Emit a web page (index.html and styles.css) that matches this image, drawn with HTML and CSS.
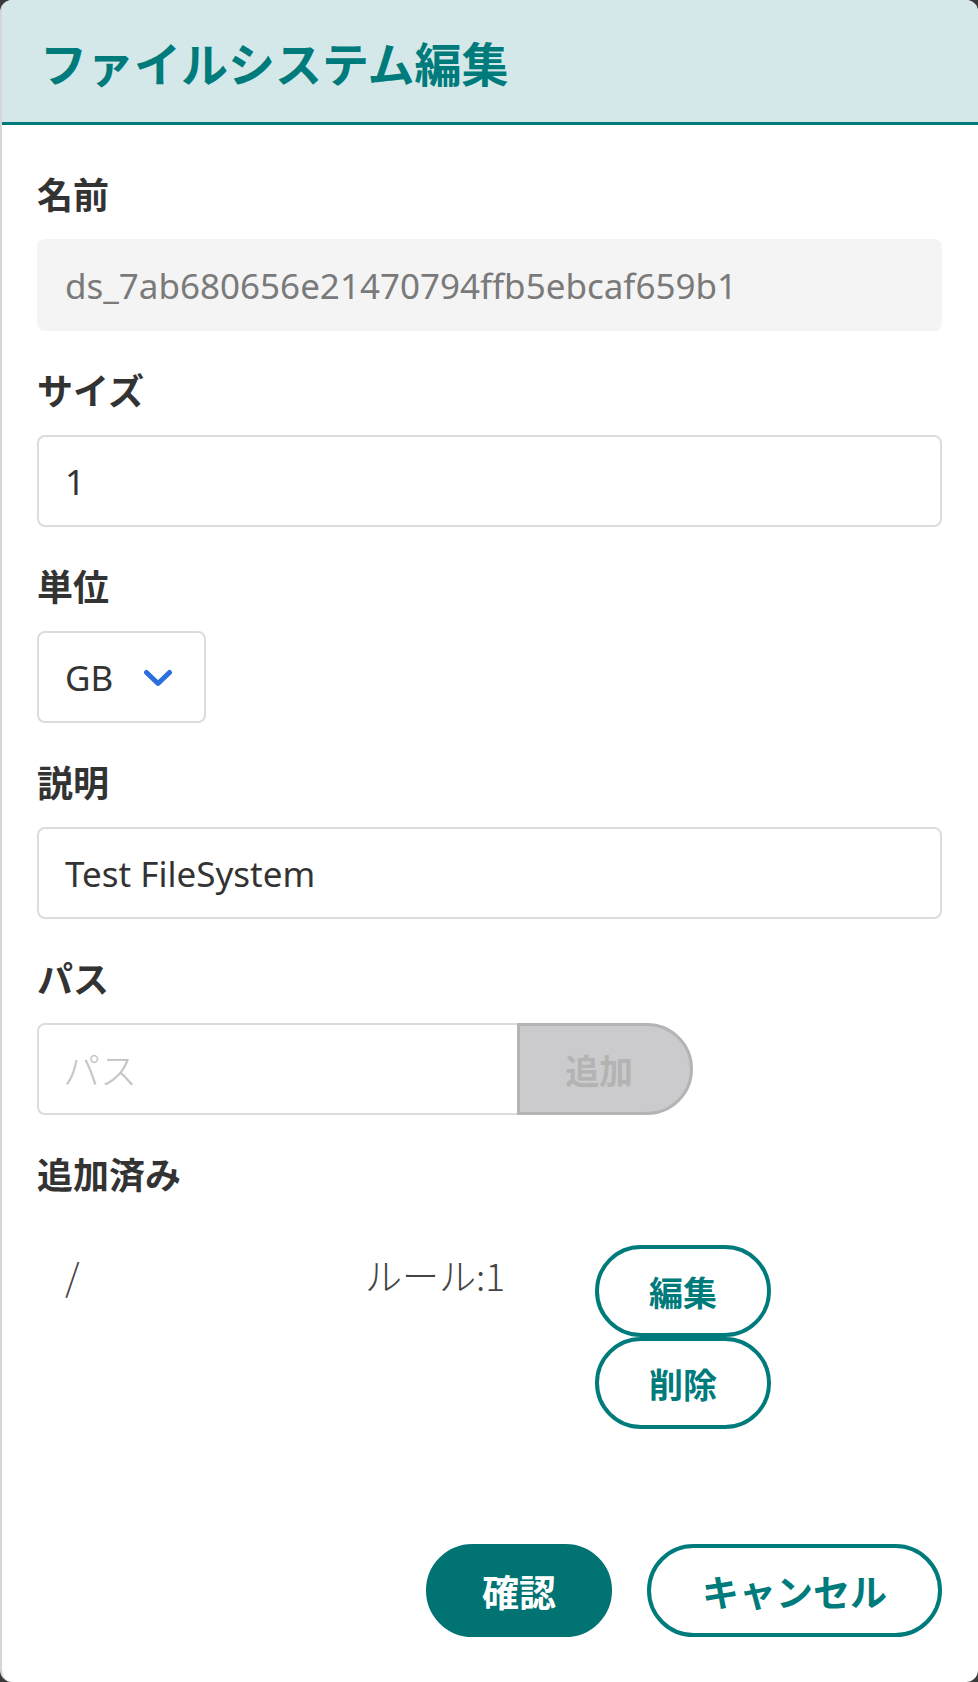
FILE: index.html
```html
<!DOCTYPE html>
<html lang="ja">
<head>
<meta charset="utf-8">
<title>ファイルシステム編集</title>
<link rel="stylesheet" href="styles.css">
</head>
<body>
<div class="dialog">
  <div class="dialog-header">
    <h1 class="dialog-title">ファイルシステム編集</h1>
  </div>
  <div class="dialog-body">
    <div class="field">
      <div class="field-label">名前</div>
      <div class="text-input disabled">ds_7ab680656e21470794ffb5ebcaf659b1</div>
    </div>
    <div class="field">
      <div class="field-label">サイズ</div>
      <div class="text-input">1</div>
    </div>
    <div class="field">
      <div class="field-label">単位</div>
      <div class="select">
        <span class="select-value">GB</span>
        <svg class="chevron" width="30" height="18" viewBox="0 0 30 18"><polyline points="3.5,3.5 15,14.5 26.5,3.5" fill="none" stroke="#2c6fdc" stroke-width="5" stroke-linecap="round" stroke-linejoin="round"/></svg>
      </div>
    </div>
    <div class="field">
      <div class="field-label">説明</div>
      <div class="text-input">Test FileSystem</div>
    </div>
    <div class="field">
      <div class="field-label">パス</div>
      <div class="path-row">
        <div class="text-input path-input placeholder">パス</div>
        <button class="add-btn" disabled>追加</button>
      </div>
    </div>
    <div class="field-label added-label">追加済み</div>
    <div class="rule-row">
      <div class="rule-path">/</div>
      <div class="rule-count">ルール:1</div>
      <div class="rule-actions">
        <button class="btn btn-outline btn-small">編集</button>
        <button class="btn btn-outline btn-small">削除</button>
      </div>
    </div>
  </div>
  <div class="dialog-footer">
    <button class="btn btn-primary">確認</button>
    <button class="btn btn-outline btn-cancel">キャンセル</button>
  </div>
</div>
</body>
</html>
```

FILE: styles.css
```css
* {
  box-sizing: border-box;
}

html, body {
  margin: 0;
  padding: 0;
  background: #3a3a3a;
}

body {
  font-family: "Noto Sans", "Noto Sans CJK JP", sans-serif;
  color: #333333;
}

.dialog {
  width: 978px;
  height: 1682px;
  background: #ffffff;
  border-radius: 12px;
  overflow: hidden;
  border-left: 2px solid #d6d6d6;
  display: flex;
  flex-direction: column;
}

.dialog-header {
  height: 125px;
  background: #d4e8ea;
  border-bottom: 3px solid #007b7b;
  display: flex;
  align-items: center;
  padding-left: 38px;
}

.dialog-title {
  margin: 0;
  font-family: "Noto Sans CJK JP", sans-serif;
  font-size: 47px;
  font-weight: 700;
  color: #007b7b;
  line-height: 1;
  letter-spacing: 0;
}

.dialog-body {
  padding: 46px 36px 0 35px;
}

.field {
  margin-bottom: 36px;
}

.field-label {
  font-family: "Noto Sans CJK JP", sans-serif;
  font-size: 36px;
  font-weight: 700;
  line-height: 44px;
  height: 44px;
  color: #333333;
  margin-bottom: 24px;
}

.text-input {
  height: 92px;
  width: 100%;
  border: 2px solid #dcdcdc;
  border-radius: 8px;
  padding: 0 26px;
  display: flex;
  align-items: center;
  font-size: 35px;
  color: #333333;
  background: #ffffff;
  white-space: nowrap;
}

.text-input.disabled {
  background: #f4f4f4;
  border-color: #f4f4f4;
  color: #7a7a7a;
}

.text-input.placeholder {
  color: #c4c4c4;
  font-family: "Noto Sans CJK JP", sans-serif;
  font-size: 37px;
  font-weight: 300;
  padding-left: 24px;
}

.select {
  width: 169px;
  height: 92px;
  border: 2px solid #dcdcdc;
  border-radius: 8px;
  padding-left: 26px;
  display: flex;
  align-items: center;
  gap: 30px;
  font-size: 35px;
  color: #333333;
}

.chevron {
  display: block;
  margin-top: 2px;
}

.path-row {
  display: flex;
  width: 656px;
}

.path-input {
  width: 481px;
  border-radius: 8px 0 0 8px;
  border-right: none;
}

.add-btn {
  width: 176px;
  height: 92px;
  background: #cbcbcd;
  border: 3px solid #b4b4b6;
  border-radius: 0 46px 46px 0;
  font-family: "Noto Sans CJK JP", sans-serif;
  font-size: 34px;
  font-weight: 700;
  color: #b3b3b3;
  padding: 0 12px 0 0;
}

.added-label {
  margin-bottom: 50px;
}

.rule-row {
  display: grid;
  grid-template-columns: 328px 230px 176px;
  align-items: start;
}

.rule-path,
.rule-count {
  font-family: "Noto Sans CJK JP", sans-serif;
  font-size: 37px;
  font-weight: 300;
  line-height: 44px;
  color: #444444;
  padding-top: 8px;
}

.rule-path {
  padding-left: 28px;
}

.rule-actions {
  display: flex;
  flex-direction: column;
}

.btn {
  font-family: "Noto Sans CJK JP", sans-serif;
  font-weight: 700;
  font-size: 37px;
  height: 93px;
  border-radius: 47px;
  padding: 0;
  cursor: pointer;
}

.btn-outline {
  background: #ffffff;
  border: 4px solid #007b7b;
  color: #007b7b;
}

.btn-small {
  width: 176px;
  height: 92px;
  font-size: 34px;
}

.btn-primary {
  width: 186px;
  background: #017373;
  border: 4px solid #017373;
  color: #ffffff;
}

.btn-cancel {
  width: 295px;
}

.dialog-footer {
  margin-top: auto;
  display: flex;
  justify-content: flex-end;
  gap: 35px;
  padding: 0 36px 45px 0;
}
```
